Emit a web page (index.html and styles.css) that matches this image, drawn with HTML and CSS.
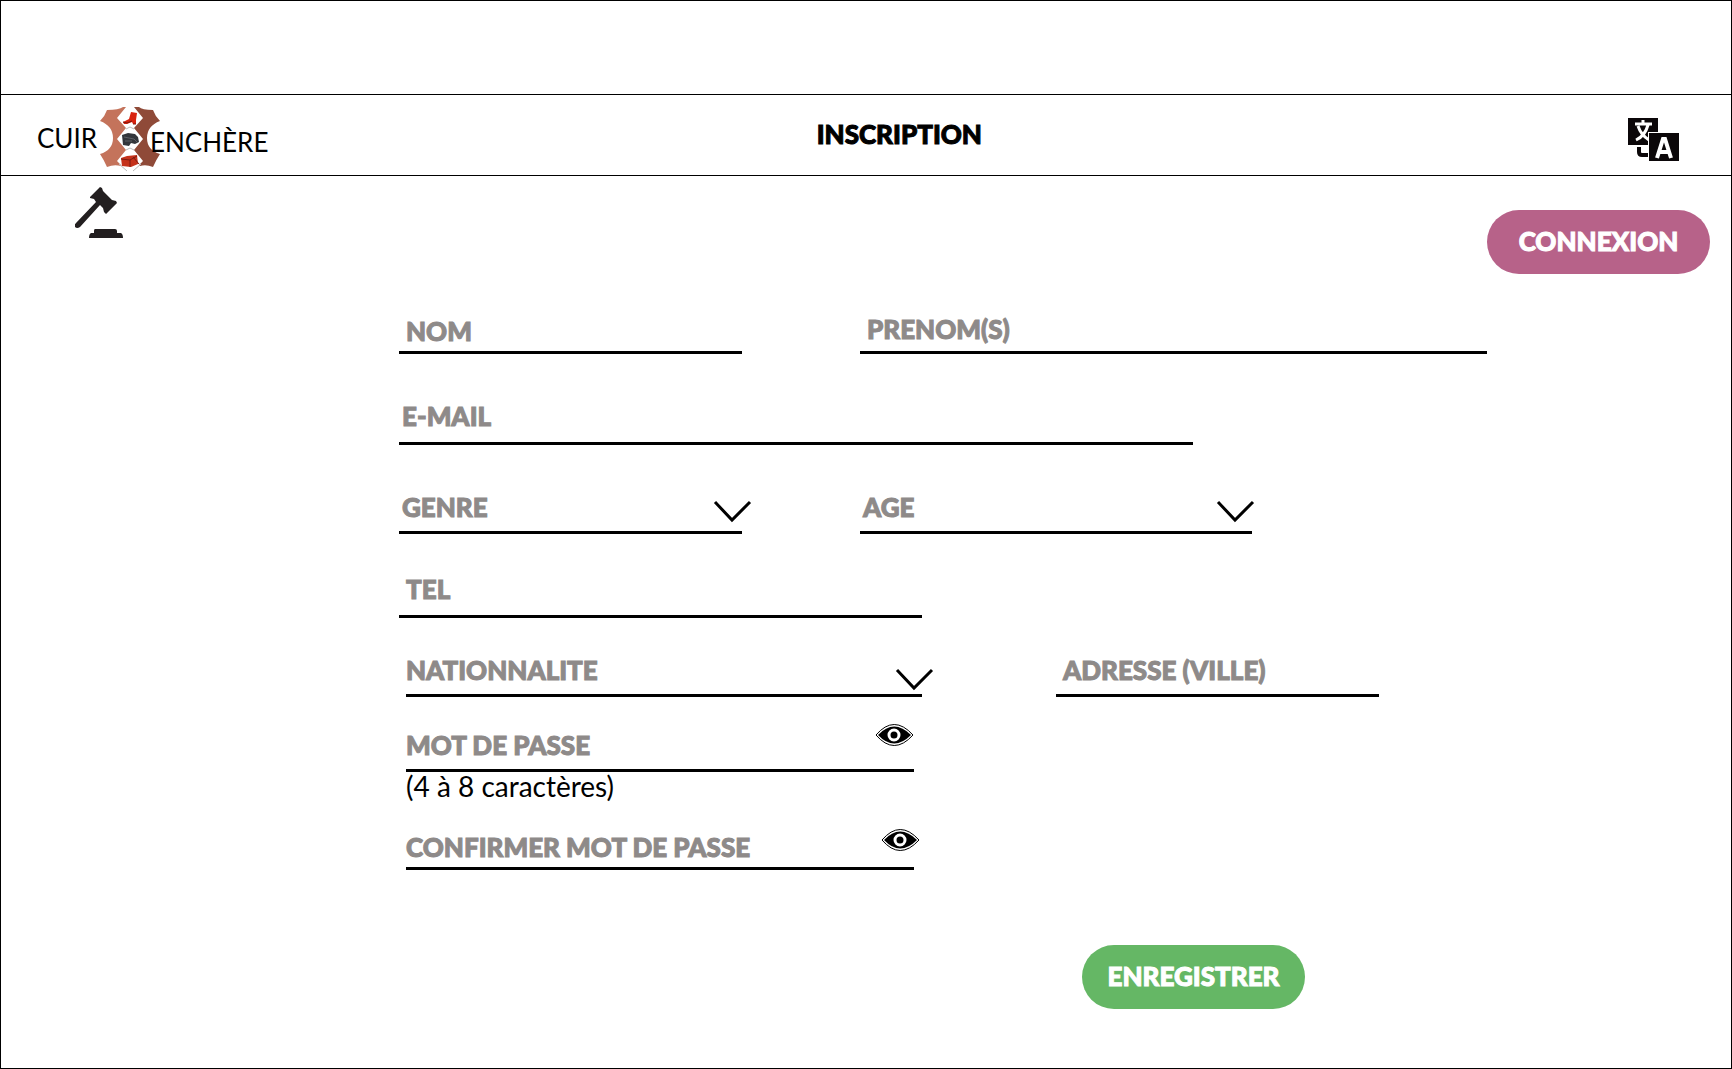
FILE: index.html
```html
<!DOCTYPE html>
<html lang="fr">
<head>
<meta charset="utf-8">
<meta name="viewport" content="width=device-width, initial-scale=1">
<title>Cuir Enchère - Inscription</title>
<link rel="stylesheet" href="styles.css">
</head>
<body>
<div class="banner"></div>
<header class="header">
  <a class="logo" href="#">
    <span class="logo-first">CUIR</span>
    <svg class="logo-hide" viewBox="0 0 60 65" aria-hidden="true">
      <path d="M30 0H23Q19 3 7 3Q5 9 0 14Q13 19 13 31Q13 43 0 47Q4 53 7 60Q14 57 21 59L30 53Z" fill="#c4735b"/>
      <path d="M30 0H39Q42 3 53 3Q55 9 60 14Q47 19 47 31Q47 43 60 47Q56 53 53 60Q46 57 40 59L30 53Z" fill="#8f4a38"/>
      <path d="M26 0H34L43 11L34 21L43 32L34 43L43 54L32 65H28L17 54L26 43L17 32L26 21L17 11Z" fill="#fff"/>
      <path d="M26 22L30 20L34 22M26 43L30 41L34 43M19 57L27 64M41 57L33 64" fill="none" stroke="#bbb" stroke-width="1"/>
      <path d="M31 5L37 6L36 13V17H33L32 15L27 17H24L23 15L29 12Z" fill="#d9230f"/>
      <path d="M23 15L27 16L32 14M33 17H36" fill="none" stroke="#7b160c"/>
      <path d="M22 28L28 26L35 27L38 30L39 35L35 37L31 36L29 39L23 38Z" fill="#33363b"/>
      <path d="M24 30L34 32L37 35M25 34H32" fill="none" stroke="#5c5f65"/>
      <path d="M21 51L27 49L37 48L38 57L31 60L22 59Z" fill="#c5321b"/>
      <path d="M21 52L30 53L37 49M30 53V60M33 50L39 57" fill="none" stroke="#7d1b10"/>
    </svg>
    <span class="logo-last">ENCHÈRE</span>
  </a>
  <h1 class="title">INSCRIPTION</h1>
  <button class="lang" type="button" aria-label="Changer de langue">
    <svg viewBox="0 0 51 43" aria-hidden="true">
      <path d="M0 0H30V14H20V27H0Z" fill="#0b0709"/>
      <path d="M11 29V34Q11 37 14 37H20" fill="none" stroke="#0b0709" stroke-width="4"/>
      <path d="M15 2V6M7 6H24M20 7Q17 18 8 22M10 8Q13 17 21 22" fill="none" stroke="#fff" stroke-width="3"/>
      <path d="M20 14H51V43H20Z" fill="#fff"/>
      <path d="M21 15H51V43H21Z" fill="#0b0709"/>
      <path d="M29 40L35 21H37L43 40M31 34H41" fill="none" stroke="#fff" stroke-width="4"/>
    </svg>
  </button>
</header>
<main>
  <div class="toolbar">
    <svg class="gavel" viewBox="0 0 48 51" aria-hidden="true">
      <path d="M25 0L27 1L28 4L37 13L41 14L42 16L31 27L29 25L28 21L25 18L5 40Q2 42 0 40Q-1 38 1 36L21 15L19 12L15 11V10Z" fill="#231f20"/>
      <path d="M20 42H40Q42 42 42 44V46H46Q48 47 48 51H14Q14 47 16 46H19V44Q19 42 20 42Z" fill="#231f20"/>
    </svg>
    <button class="button button-login" type="button">CONNEXION</button>
  </div>
  <form class="form">
    <div class="row row-name">
      <div class="field field-snug"><label for="nom">NOM</label><input id="nom" type="text"></div>
      <div class="field field-close"><label for="prenom">PRENOM(S)</label><input id="prenom" type="text"></div>
    </div>
    <div class="row row-mail">
      <div class="field field-loose field-start"><label for="mail">E-MAIL</label><input id="mail" type="email"></div>
    </div>
    <div class="row row-about">
      <div class="field field-start"><label for="genre">GENRE</label>
        <select id="genre"><option></option><option value="f">Femme</option><option value="h">Homme</option></select>
        <svg class="chevron" viewBox="0 0 37 22" aria-hidden="true"><path d="M1 1L18 19L36 1"/></svg></div>
      <div class="field field-start"><label for="age">AGE</label>
        <select id="age"><option></option><option value="18">18 - 30</option><option value="31">31 et plus</option></select>
        <svg class="chevron" viewBox="0 0 37 22" aria-hidden="true"><path d="M1 1L18 19L36 1"/></svg></div>
    </div>
    <div class="row row-tel">
      <div class="field field-loose"><label for="tel">TEL</label><input id="tel" type="tel"></div>
    </div>
    <div class="row row-origin">
      <div class="field field-edge"><label for="nation">NATIONNALITE</label>
        <select id="nation"><option></option><option value="fr">Française</option></select>
        <svg class="chevron chevron-low" viewBox="0 0 37 22" aria-hidden="true"><path d="M1 1L18 19L36 1"/></svg></div>
      <div class="field"><label for="ville">ADRESSE (VILLE)</label><input id="ville" type="text"></div>
    </div>
    <div class="row row-pass">
      <div class="field field-edge"><label for="pass">MOT DE PASSE</label><input id="pass" type="password" aria-describedby="hint">
        <button class="eye" type="button" aria-label="Afficher le mot de passe">
          <svg viewBox="0 0 39 22" aria-hidden="true"><path d="M1 11Q19 -10 38 11Q19 32 1 11Z" fill="#fff" stroke="#000"/><path d="M3 11Q19 -6 36 11Q19 28 3 11Z"/><circle cx="19" cy="11" r="5" fill="none" stroke="#fff" stroke-width="3"/></svg>
        </button></div>
    </div>
    <p class="hint" id="hint">(4 à 8 caractères)</p>
    <div class="row row-confirm">
      <div class="field field-edge field-snug"><label for="confirm">CONFIRMER MOT DE PASSE</label><input id="confirm" type="password">
        <button class="eye eye-out" type="button" aria-label="Afficher la confirmation">
          <svg viewBox="0 0 39 22" aria-hidden="true"><path d="M1 11Q19 -10 38 11Q19 32 1 11Z" fill="#fff" stroke="#000"/><path d="M3 11Q19 -6 36 11Q19 28 3 11Z"/><circle cx="19" cy="11" r="5" fill="none" stroke="#fff" stroke-width="3"/></svg>
        </button></div>
    </div>
    <div class="row row-submit"><button class="button button-save" type="submit">ENREGISTRER</button></div>
  </form>
</main>
</body>
</html>
```
FILE: styles.css
```css
* { box-sizing: border-box; }
body {
  margin: 0;
  min-height: 100vh;
  border: 1px solid #000;
  background: #fff;
  color: #000;
  font-family: Lato, "Noto Sans", sans-serif;
  font-size: 26px;
  line-height: 32px;
}
button { padding: 0; border: 0; background: none; font: inherit; cursor: pointer; }
svg { display: block; }
.banner { height: 93px; }
.header {
  display: grid;
  grid-template-columns: 783fr auto 700fr;
  height: 82px;
  padding: 0 52px 0 36px;
  border-top: 1px solid #000;
  border-bottom: 1px solid #000;
}
.logo {
  display: flex;
  align-items: flex-start;
  padding-top: 12px;
  color: #000;
  text-decoration: none;
}
.logo-first { width: 63px; padding-top: 15px; }
.logo-hide { width: 60px; height: 65px; }
.logo-last { margin-left: -10px; padding-top: 19px; z-index: 1; }
.title {
  margin: 0;
  padding-top: 23px;
  font-size: 26px;
  font-weight: 900;
  -webkit-text-stroke: 1px currentColor;
}
.lang { align-self: start; justify-self: end; margin-top: 23px; }
.lang svg { width: 51px; height: 43px; }
.toolbar {
  display: flex;
  justify-content: space-between;
  align-items: flex-start;
  height: 98px;
  padding: 11px 21px 0 74px;
}
.gavel { width: 48px; height: 51px; }
.button {
  width: 223px;
  height: 64px;
  padding-bottom: 2px;
  border-radius: 32px;
  color: #fff;
  font-weight: 900;
  -webkit-text-stroke: 1px currentColor;
}
.button-login { margin-top: 23px; background: #b76289; }
.button-save { background: #65b765; }
.form { margin: 0 244px 0 398px; padding-top: 39px; }
.row { display: grid; align-items: end; }
.row .field:nth-child(2) { grid-column: 3; }
.row-name { grid-template-columns: 343fr 118fr 627fr; }
.row-mail { grid-template-columns: 794fr 294fr; margin-top: 46px; }
.row-about { grid-template-columns: 343fr 118fr 392fr 235fr; margin-top: 46px; }
.row-tel { grid-template-columns: 523fr 565fr; margin-top: 39px; }
.row-origin { grid-template-columns: 523fr 134fr 323fr 108fr; margin-top: 36px; }
.row-pass { grid-template-columns: 515fr 573fr; margin-top: 32px; }
.row-confirm { grid-template-columns: 515fr 573fr; margin-top: 31px; }
.row-submit { grid-template-columns: 683fr 405fr; margin-top: 75px; }
.row-submit .button { grid-column: 2; }
.field {
  display: flex;
  align-items: flex-start;
  min-width: 0;
  padding: 0 0 8px 7px;
  border-bottom: 3px solid #000;
}
.field-start { padding-left: 3px; }
.field-snug { padding-bottom: 4px; }
.field-close { padding-bottom: 6px; }
.field-loose { padding-bottom: 10px; }
.field-edge { margin-left: 7px; padding-left: 0; }
.field label {
  color: #8e8a89;
  font-weight: 900;
  white-space: nowrap;
  -webkit-text-stroke: 1px currentColor;
}
.field input, .field select {
  flex: 1;
  min-width: 0;
  width: 0;
  height: 32px;
  margin: 0;
  padding: 0 8px;
  border: 0;
  outline: 0;
  appearance: none;
  background: none;
  font: inherit;
}
.chevron {
  width: 37px;
  height: 22px;
  margin: 10px -9px 0 0;
  overflow: visible;
  fill: none;
  stroke: #000;
  stroke-width: 3;
  pointer-events: none;
}
.chevron-low { margin: 15px -11px -5px 0; }
.row-about .field:nth-child(2) .chevron { margin-right: -2px; }
.eye { margin-top: -5px; }
.eye svg { width: 39px; height: 22px; }
.eye-out { margin: -2px -6px 0 0; }
.hint { margin: 0 0 0 7px; font-size: 28px; line-height: 28px; }
```
